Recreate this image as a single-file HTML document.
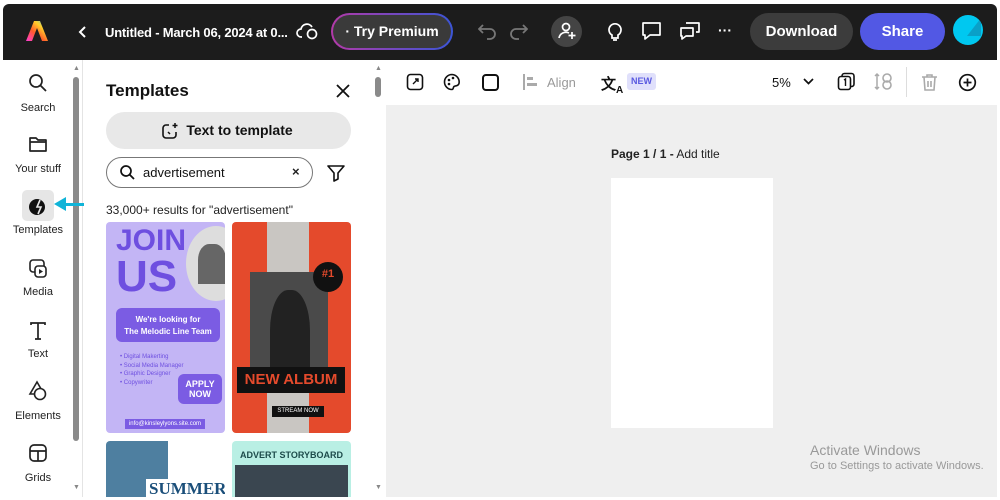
<!DOCTYPE html>
<html><head><style>
*{box-sizing:border-box;margin:0;padding:0}
body{width:1000px;height:500px;background:#fff;font-family:"Liberation Sans",sans-serif;position:relative;overflow:hidden;color:#222}
.abs{position:absolute}
#hdr{left:3px;top:4px;width:994px;height:56px;background:#1c1c1c;border-radius:6px 6px 0 0}
.w{color:#fff;font-weight:bold}
.rail{left:3px;top:60px;width:80px;height:437px;background:#fff;border-right:1px solid #e4e4e4}
.ri{position:absolute;left:0;width:70px;text-align:center;font-size:11px;color:#222}
.ri svg{display:block;margin:0 auto 6px}
.sb{background:#8a8a8a;border-radius:3px;width:6px}
.panel{left:84px;top:60px;width:288px;height:437px;background:#fff}
.canvas{left:386px;top:105px;width:611px;height:392px;background:#efefef}
.tb{left:386px;top:60px;width:611px;height:45px;background:#fff}
</style></head><body>
<div class="abs" id="hdr"></div>
<svg class="abs" style="left:26px;top:20px" width="22" height="22" viewBox="0 0 22 22"><defs><linearGradient id="g" x1="0" y1="1" x2="1" y2="0"><stop offset="0" stop-color="#ff3bd6"/><stop offset=".4" stop-color="#ff5a2a"/><stop offset=".7" stop-color="#ffcf2a"/><stop offset="1" stop-color="#39c6ff"/></linearGradient></defs><path d="M8 1h6l8 20h-6l-5-13-5 13H0z" fill="url(#g)"/></svg>
<svg class="abs" style="left:78px;top:26px" width="10" height="12" viewBox="0 0 10 12"><path d="M7 1 2 6l5 5" stroke="#fff" stroke-width="2" fill="none"/></svg>
<div class="abs w" style="left:105px;top:25px;font-size:13px;letter-spacing:-0.2px">Untitled - March 06, 2024 at 0...</div>
<svg class="abs" style="left:296px;top:21px" width="24" height="20" viewBox="0 0 24 20"><path d="M6 16h-1a4 4 0 0 1 0-8 6 6 0 0 1 11-2" stroke="#fff" stroke-width="1.7" fill="none"/><circle cx="16" cy="13" r="4.5" stroke="#fff" stroke-width="1.7" fill="none"/></svg>
<div class="abs" style="left:331px;top:13px;width:122px;height:37px;border-radius:19px;background:linear-gradient(90deg,#b23aa8,#3b55d6);padding:2px"><div style="width:100%;height:100%;border-radius:17px;background:#3a3a3a;color:#fff;font-weight:bold;font-size:14px;line-height:33px;text-align:center">· Try Premium</div></div>
<svg class="abs" style="left:478px;top:22px" width="20" height="18" viewBox="0 0 20 18"><path d="M5 3 1 7l4 4M1 7h11a5 5 0 0 1 0 10H9" stroke="#777" stroke-width="1.8" fill="none"/></svg>
<svg class="abs" style="left:508px;top:22px" width="20" height="18" viewBox="0 0 20 18"><path d="M15 3l4 4-4 4M19 7H8a5 5 0 0 0 0 10h3" stroke="#777" stroke-width="1.8" fill="none"/></svg>
<div class="abs" style="left:551px;top:16px;width:31px;height:31px;border-radius:50%;background:#444"></div>
<svg class="abs" style="left:557px;top:21px" width="20" height="20" viewBox="0 0 20 20"><circle cx="9" cy="6" r="3.5" stroke="#fff" stroke-width="1.7" fill="none"/><path d="M2 17a7 7 0 0 1 10-5M15 11v7M11.5 14.5h7" stroke="#fff" stroke-width="1.7" fill="none"/></svg>
<svg class="abs" style="left:606px;top:21px" width="18" height="20" viewBox="0 0 18 20"><path d="M6 14a6 6 0 1 1 6 0v3H6z M7 19h4" stroke="#fff" stroke-width="1.7" fill="none"/></svg>
<svg class="abs" style="left:641px;top:21px" width="22" height="20" viewBox="0 0 22 20"><path d="M2 2h17v12H9l-5 4v-4H2z" stroke="#fff" stroke-width="1.7" fill="none" stroke-linejoin="round"/></svg>
<svg class="abs" style="left:679px;top:21px" width="22" height="20" viewBox="0 0 22 20"><path d="M7 2h13v9h-3M2 7h12v8H7l-4 3v-3H2z" stroke="#fff" stroke-width="1.7" fill="none" stroke-linejoin="round"/></svg>
<div class="abs w" style="left:718px;top:22px;font-size:14px">···</div>
<div class="abs w" style="left:750px;top:13px;width:103px;height:37px;border-radius:19px;background:#3c3c3c;font-size:15px;line-height:37px;text-align:center">Download</div>
<div class="abs w" style="left:860px;top:13px;width:85px;height:37px;border-radius:19px;background:#5258e4;font-size:15px;line-height:37px;text-align:center">Share</div>
<div class="abs" style="left:953px;top:15px;width:30px;height:30px;border-radius:50%;background:#00c8f0;overflow:hidden"><div style="position:absolute;left:14px;top:3px;width:0;height:0;border-left:14px solid transparent;border-bottom:18px solid #0aa0c8"></div></div>

<div class="abs rail">
<div class="ri" style="top:13px"><svg width="20" height="20" viewBox="0 0 20 20"><circle cx="8" cy="8" r="6" stroke="#222" stroke-width="1.7" fill="none"/><path d="M12.5 12.5 18 18" stroke="#222" stroke-width="1.8"/></svg><span style="position:relative;top:3px">Search</span></div>
<div class="ri" style="top:74px"><svg width="20" height="20" viewBox="0 0 20 20"><path d="M2 4h6l2 2h8v11H2z M2 8h16" stroke="#222" stroke-width="1.7" fill="none" stroke-linejoin="round"/></svg><span style="position:relative;top:3px">Your stuff</span></div>
<div style="position:absolute;left:19px;top:130px;width:32px;height:31px;background:#e6e6e6;border-radius:5px"></div>
<div class="ri" style="top:136px"><svg width="20" height="20" viewBox="0 0 20 20"><circle cx="9" cy="11" r="8" fill="#111"/><path d="M12 4 9 11h4l-3 7" stroke="#e6e6e6" stroke-width="1.6" fill="none"/></svg><span style="position:relative;top:2px">Templates</span></div>
<div class="ri" style="top:198px"><svg width="20" height="22" viewBox="0 0 20 22"><rect x="2" y="2" width="14" height="12" rx="3" stroke="#222" stroke-width="1.6" fill="none"/><rect x="7" y="8" width="11" height="11" rx="3" stroke="#222" stroke-width="1.6" fill="#fff"/><path d="M11 11v5l4-2.5z" fill="#222"/></svg>Media</div>
<div class="ri" style="top:260px"><svg width="20" height="22" viewBox="0 0 20 22"><path d="M3 5V3h14v2M10 3v16M7 19h6" stroke="#222" stroke-width="1.7" fill="none"/></svg>Text</div>
<div class="ri" style="top:320px"><svg width="22" height="22" viewBox="0 0 22 22"><path d="M10 2 3 14h14z" stroke="#222" stroke-width="1.6" fill="none"/><circle cx="13" cy="14" r="5.5" stroke="#222" stroke-width="1.6" fill="#fff"/></svg><span style="position:relative;top:2px">Elements</span></div>
<div class="ri" style="top:382px"><svg width="20" height="22" viewBox="0 0 20 22"><rect x="2" y="3" width="16" height="16" rx="4" stroke="#222" stroke-width="1.7" fill="none"/><path d="M2 9h16M10 9v10" stroke="#222" stroke-width="1.7"/></svg><span style="position:relative;top:2px">Grids</span></div>
<div class="sb abs" style="left:70px;top:17px;height:364px"></div>
<div class="abs" style="left:70px;top:5px;font-size:7px;color:#888">▲</div>
<div class="abs" style="left:70px;top:424px;font-size:7px;color:#888">▼</div>
</div>
<div class="abs" style="left:64px;top:203px;width:34px;height:3px;background:#10b4d8"></div>
<div class="abs" style="left:54px;top:197px;width:0;height:0;border-top:7px solid transparent;border-bottom:7px solid transparent;border-right:12px solid #10b4d8"></div>

<div class="abs panel">
<div class="abs" style="left:22px;top:21px;font-size:17px;font-weight:bold;color:#111">Templates</div>
<svg class="abs" style="left:252px;top:24px" width="14" height="14" viewBox="0 0 14 14"><path d="M1 1l12 12M13 1 1 13" stroke="#111" stroke-width="1.8"/></svg>
<div class="abs" style="left:22px;top:52px;width:245px;height:37px;border-radius:19px;background:#e8e8e8;font-size:14px;font-weight:bold;line-height:37px;text-align:center;color:#111;padding-left:22px">Text to template</div>
<svg class="abs" style="left:77px;top:62px" width="18" height="18" viewBox="0 0 18 18"><path d="M8 3H5a3 3 0 0 0-3 3v7a3 3 0 0 0 3 3h7a3 3 0 0 0 3-3v-3" stroke="#111" stroke-width="1.6" fill="none"/><path d="M14 1v5M11.5 3.5h5M7 10l2 2" stroke="#111" stroke-width="1.5"/></svg>
<div class="abs" style="left:22px;top:97px;width:207px;height:31px;border-radius:16px;border:1.5px solid #777"></div>
<svg class="abs" style="left:35px;top:104px" width="17" height="17" viewBox="0 0 17 17"><circle cx="7" cy="7" r="5" stroke="#111" stroke-width="1.7" fill="none"/><path d="M10.5 10.5 15 15" stroke="#111" stroke-width="1.8"/></svg>
<div class="abs" style="left:59px;top:105px;font-size:13px;color:#111">advertisement</div>
<div class="abs" style="left:208px;top:104px;font-size:13px;font-weight:bold">×</div>
<svg class="abs" style="left:243px;top:104px" width="18" height="18" viewBox="0 0 18 18"><path d="M1 2h16l-6 7v6l-4 2V9z" stroke="#111" stroke-width="1.6" fill="none" stroke-linejoin="round"/></svg>
<div class="abs" style="left:22px;top:143px;font-size:12px;color:#222">33,000+ results for "advertisement"</div>
<div class="abs" style="left:22px;top:162px;width:119px;height:211px;border-radius:4px;background:#c3b5f5;overflow:hidden">
<div class="abs" style="left:10px;top:4px;font-size:30px;font-weight:bold;color:#6e4fe0;line-height:30px">JOIN<br><span style="font-size:44px;line-height:42px">US</span></div>
<div class="abs" style="left:80px;top:4px;width:60px;height:75px;border-radius:50%;background:#ddd"></div>
<div class="abs" style="left:92px;top:22px;width:28px;height:40px;background:#666;border-radius:40% 40% 0 0"></div>
<div class="abs" style="left:10px;top:86px;width:104px;height:34px;border-radius:6px;background:#7b5ce3;color:#fff;font-size:8px;font-weight:bold;text-align:center;padding-top:6px;line-height:12px">We're looking for<br>The Melodic Line Team</div>
<div class="abs" style="left:14px;top:131px;font-size:6px;color:#6e4fe0;line-height:8.5px">• Digital Makerting<br>• Social Media Manager<br>• Graphic Designer<br>• Copywriter</div>
<div class="abs" style="left:72px;top:152px;width:44px;height:30px;border-radius:6px;background:#7b5ce3;color:#fff;font-size:9px;font-weight:bold;text-align:center;line-height:10px;padding-top:5px">APPLY<br>NOW</div>
<div class="abs" style="left:19px;top:197px;width:80px;height:10px;background:#7b5ce3;color:#fff;font-size:6px;text-align:center;line-height:10px">info@kinsleylyons.site.com</div>
</div>
<div class="abs" style="left:148px;top:162px;width:119px;height:211px;border-radius:4px;background:#e44a2c;overflow:hidden">
<div class="abs" style="left:35px;top:0;width:42px;height:211px;background:#c9c6c2"></div>
<div class="abs" style="left:18px;top:50px;width:78px;height:108px;background:#4a4a4a"></div>
<div class="abs" style="left:38px;top:68px;width:40px;height:90px;background:#222;border-radius:45% 45% 0 0"></div>
<div class="abs" style="left:81px;top:40px;width:30px;height:30px;border-radius:50%;background:#111;color:#e44a2c;font-size:11px;font-weight:bold;text-align:center;line-height:24px">#1</div>
<div class="abs" style="left:5px;top:145px;width:108px;height:26px;background:#111;color:#e44a2c;font-size:15px;font-weight:bold;text-align:center;line-height:26px">NEW ALBUM</div>
<div class="abs" style="left:40px;top:184px;width:52px;height:11px;background:#111;color:#fff;font-size:6px;text-align:center;line-height:11px">STREAM NOW</div>
</div>
<div class="abs" style="left:22px;top:381px;width:119px;height:56px;background:#fff;overflow:hidden;border-radius:4px 4px 0 0"><div class="abs" style="left:0;top:0;width:62px;height:56px;background:#4e7fa0"></div><div class="abs" style="left:40px;top:38px;font-family:'Liberation Serif',serif;font-weight:bold;font-size:17px;color:#1b4f7a;background:#fff;padding:0 3px">SUMMER</div></div>
<div class="abs" style="left:148px;top:381px;width:119px;height:56px;background:#b9efe4;overflow:hidden;border-radius:4px 4px 0 0"><div class="abs" style="left:0;top:9px;width:119px;font-size:9px;font-weight:bold;text-align:center;color:#1d4b4b">ADVERT STORYBOARD</div><div class="abs" style="left:3px;top:24px;width:113px;height:32px;background:#3a4650"></div></div>
<div class="sb abs" style="left:291px;top:17px;height:20px"></div>
<div class="abs" style="left:291px;top:5px;font-size:7px;color:#888">▲</div>
<div class="abs" style="left:291px;top:424px;font-size:7px;color:#888">▼</div>
</div>

<div class="abs tb"></div>
<svg class="abs" style="left:406px;top:73px" width="18" height="18" viewBox="0 0 18 18"><rect x="1.5" y="1.5" width="15" height="15" rx="3" stroke="#111" stroke-width="1.6" fill="none"/><path d="M7 11l5-5M9 6h3v3" stroke="#111" stroke-width="1.4" fill="none"/></svg>
<svg class="abs" style="left:443px;top:73px" width="18" height="18" viewBox="0 0 18 18"><path d="M9 1.5a7.5 7.5 0 1 0 0 15c1.5 0 1-2 2-3s4 0 5-3A7.5 7.5 0 0 0 9 1.5z" stroke="#111" stroke-width="1.6" fill="none"/><circle cx="6" cy="7" r="1.3" fill="#111"/><circle cx="10" cy="5" r="1.3" fill="#111"/><circle cx="6" cy="11" r="1.3" fill="#111"/></svg>
<div class="abs" style="left:482px;top:74px;width:17px;height:17px;border:2px solid #111;border-radius:4px"></div>
<svg class="abs" style="left:522px;top:73px" width="16" height="18" viewBox="0 0 16 18"><path d="M2 1v16" stroke="#aaa" stroke-width="2"/><rect x="5" y="4" width="6" height="3" fill="#aaa"/><rect x="5" y="10" width="10" height="3" fill="#aaa"/></svg>
<div class="abs" style="left:547px;top:75px;font-size:13px;color:#999">Align</div>
<div class="abs" style="left:601px;top:73px;font-size:15px;font-weight:bold;color:#111">文<sub style="font-size:10px">A</sub></div>
<div class="abs" style="left:627px;top:73px;width:29px;height:17px;background:#e0e0fb;border-radius:3px;color:#5a5ae0;font-size:9px;font-weight:bold;text-align:center;line-height:17px">NEW</div>
<div class="abs" style="left:772px;top:75px;font-size:13px;color:#111">5%</div>
<svg class="abs" style="left:803px;top:78px" width="11" height="8" viewBox="0 0 11 8"><path d="M1 1l4.5 4.5L10 1" stroke="#111" stroke-width="1.7" fill="none"/></svg>
<svg class="abs" style="left:837px;top:72px" width="19" height="19" viewBox="0 0 19 19"><rect x="5" y="1.5" width="12" height="13" rx="2.5" stroke="#111" stroke-width="1.6" fill="none"/><rect x="1.5" y="4.5" width="12" height="13" rx="2.5" stroke="#111" stroke-width="1.6" fill="#fff"/><path d="M7 8l1.5-1v7" stroke="#111" stroke-width="1.4" fill="none"/></svg>
<svg class="abs" style="left:874px;top:72px" width="20" height="19" viewBox="0 0 20 19"><path d="M3 2v15M1 4l2-2 2 2M1 15l2 2 2-2" stroke="#aaa" stroke-width="1.5" fill="none"/><circle cx="13" cy="6" r="4" stroke="#aaa" stroke-width="1.6" fill="none"/><circle cx="13" cy="13" r="4" stroke="#aaa" stroke-width="1.6" fill="none"/></svg>
<div class="abs" style="left:906px;top:67px;width:1px;height:30px;background:#ddd"></div>
<svg class="abs" style="left:921px;top:73px" width="17" height="18" viewBox="0 0 17 18"><path d="M1 4h15M6 4V2h5v2M3 4l1 13h9l1-13M7 8v6M10 8v6" stroke="#aaa" stroke-width="1.6" fill="none"/></svg>
<svg class="abs" style="left:958px;top:73px" width="19" height="19" viewBox="0 0 19 19"><circle cx="9.5" cy="9.5" r="7.8" stroke="#111" stroke-width="1.7" fill="none"/><path d="M9.5 5.5v8M5.5 9.5h8" stroke="#111" stroke-width="1.7"/></svg>

<div class="abs canvas">
<div class="abs" style="left:225px;top:42px;font-size:12px;color:#222"><b>Page 1 / 1 -</b> Add title</div>
<div class="abs" style="left:225px;top:73px;width:162px;height:250px;background:#fff"></div>
<div class="abs" style="left:424px;top:337px;font-size:14px;color:#999">Activate Windows</div>
<div class="abs" style="left:424px;top:355px;font-size:11px;color:#999">Go to Settings to activate Windows.</div>
</div>
<div class="abs" style="left:0;top:497px;width:1000px;height:3px;background:#fff"></div>
</body></html>
